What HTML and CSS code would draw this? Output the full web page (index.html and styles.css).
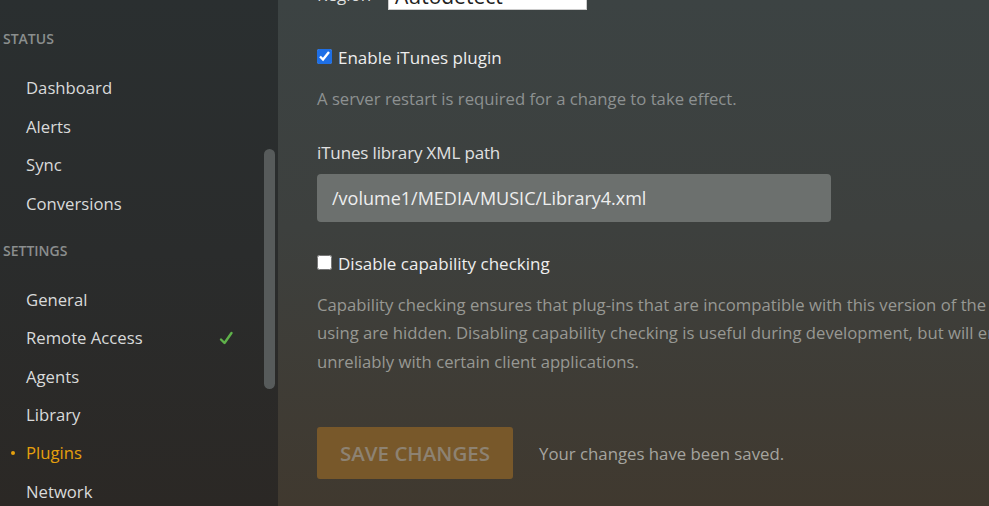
FILE: index.html
```html
<!DOCTYPE html>
<html lang="en">
<head>
  <meta charset="UTF-8">
  <title>Plugins - Settings</title>
  <link rel="stylesheet" href="styles.css">
</head>
<body>

<div class="page">
  <aside class="sidebar">
    <div class="nav-header">Status</div>
    <a class="nav-item">Dashboard</a>
    <a class="nav-item">Alerts</a>
    <a class="nav-item">Sync</a>
    <a class="nav-item">Conversions</a>

    <div class="nav-header later">Settings</div>
    <a class="nav-item">General</a>
    <a class="nav-item">Remote Access
      <svg class="ok" width="16" height="14" viewBox="0 0 16 14"><path d="M3 8.5 L6.5 12 L13.5 2" fill="none" stroke="#5fb14a" stroke-width="2.4" stroke-linecap="round" stroke-linejoin="round"/></svg>
    </a>
    <a class="nav-item">Agents</a>
    <a class="nav-item">Library</a>
    <a class="nav-item active">Plugins</a>
    <a class="nav-item">Network</a>

    <div class="scroll-thumb"></div>
  </aside>

  <main class="content">
    <!-- top row is scrolled off screen -->
    <div class="region-row">
      <label class="region-label">Region</label>
      <div class="region-select">Autodetect</div>
    </div>

    <label class="check-row first">
      <input type="checkbox" checked> Enable iTunes plugin
    </label>
    <p class="help">A server restart is required for a change to take effect.</p>

    <div class="field-label">iTunes library XML path</div>
    <input class="text-input" type="text" value="/volume1/MEDIA/MUSIC/Library4.xml">

    <label class="check-row second">
      <input type="checkbox"> Disable capability checking
    </label>
    <p class="help long">Capability checking ensures that plug-ins that are incompatible with this version of the server you are<br>
      using are hidden. Disabling capability checking is useful during development, but will enable plug-ins that may fail or perform<br>
      unreliably with certain client applications.</p>

    <div class="actions">
      <button class="btn-save" disabled>Save Changes</button>
      <span class="saved-msg">Your changes have been saved.</span>
    </div>
  </main>
</div>

</body>
</html>
```

FILE: styles.css
```css
html, body {
  margin: 0;
  padding: 0;
  height: 100%;
  overflow: hidden;
}

body {
  font-family: 'Open Sans', 'Liberation Sans', sans-serif;
  background: #3b3f3e;
  color: #eee;
}

.page {
  display: flex;
  height: 506px;
}

/* left navigation */
.sidebar {
  position: relative;
  width: 278px;
  flex-shrink: 0;
  padding-top: 29px;
  box-sizing: border-box;
  background: linear-gradient(180deg, #2a2f30 0%, #2a2c2c 50%, #2b2825 100%);
  overflow: hidden;
}

.nav-header {
  height: 20px;
  line-height: 20px;
  padding-left: 3px;
  margin-bottom: 19.7px;
  font-size: 14px;
  font-weight: 600;
  text-transform: uppercase;
  color: #8a8e8e;
}

.nav-header.later {
  margin-top: 18.3px;
}

.nav-item {
  display: flex;
  align-items: center;
  justify-content: space-between;
  height: 38.4px;
  padding: 0 44px 0 26px;
  font-size: 16.7px;
  color: #d9dada;
  position: relative;
}

.nav-item .ok {
  margin-top: 1px;
}

.nav-item.active {
  color: #e5a00d;
}

.nav-item.active::before {
  content: "";
  position: absolute;
  left: 11px;
  top: 50%;
  width: 4px;
  height: 4px;
  margin-top: -2px;
  border-radius: 50%;
  background: #e5a00d;
}

.scroll-thumb {
  position: absolute;
  left: 264px;
  top: 149px;
  width: 11px;
  height: 240px;
  border-radius: 6px;
  background: #575b5b;
}

/* main settings panel */
.content {
  flex: 1;
  padding-left: 39px;
  background: linear-gradient(180deg, #3c4343 0%, #3d403e 45%, #40392f 100%);
  overflow: hidden;
}

.region-row {
  display: flex;
  height: 34px;
  margin-top: -24px;
}

.region-label {
  width: 71px;
  padding-top: 7px;
  font-size: 17px;
  line-height: 24px;
  color: #ddd;
}

.region-select {
  width: 199px;
  height: 34px;
  line-height: 24px;
  padding: 7px 0 0 6px;
  box-sizing: border-box;
  background: #fff;
  border: 1px solid #ccc;
  color: #222;
  font-size: 21px;
  overflow: hidden;
}

.check-row {
  display: flex;
  align-items: center;
  font-size: 17px;
  color: #eee;
  height: 22px;
}

.check-row.first {
  margin-top: 36px;
}

.check-row.second {
  margin-top: 31px;
}

.check-row input {
  width: 15px;
  height: 15px;
  margin: -2px 6px 0 0;
  accent-color: #1e6fe6;
}

.help {
  margin: 17px 0 0;
  font-size: 16.7px;
  color: #8d9191;
  line-height: 28.5px;
}

.help.long {
  margin-top: 16px;
  white-space: nowrap;
  color: #979893;
}

.field-label {
  margin-top: 27px;
  font-size: 17px;
  letter-spacing: -0.15px;
  color: #e0e0e0;
}

.text-input {
  display: block;
  margin-top: 10px;
  width: 514px;
  height: 48px;
  box-sizing: border-box;
  padding: 0 15px;
  border: none;
  border-radius: 4px;
  background: #6c706e;
  color: #eee;
  font-family: inherit;
  font-size: 18px;
}

.actions {
  display: flex;
  align-items: center;
  margin-top: 51px;
}

.btn-save {
  width: 196px;
  height: 52px;
  border: none;
  border-radius: 3px;
  background: #78582a;
  color: #8d8272;
  font-family: inherit;
  font-size: 20.5px;
  font-weight: 600;
  text-transform: uppercase;
}

.saved-msg {
  margin-left: 26px;
  font-size: 16.8px;
  color: #a5a49f;
}
```
